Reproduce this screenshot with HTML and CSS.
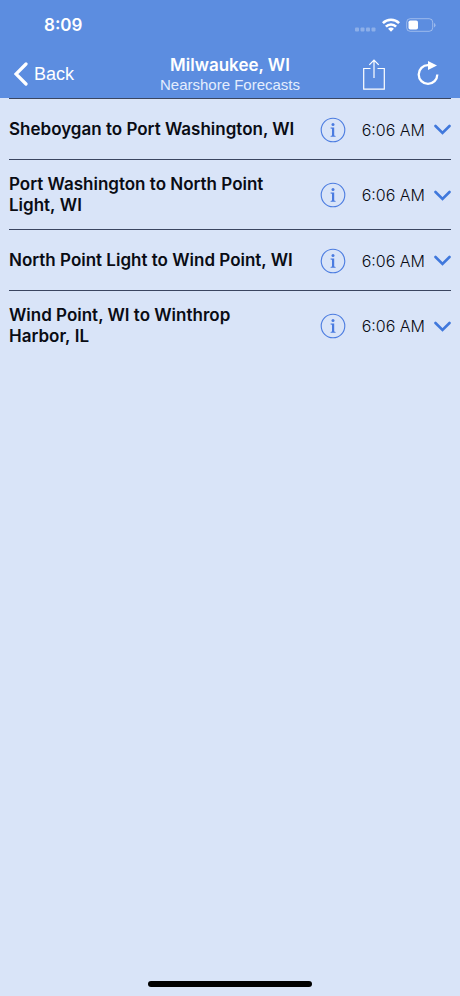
FILE: index.html
```html
<!DOCTYPE html>
<html lang="en">
<head>
  <meta charset="UTF-8">
  <meta name="viewport" content="width=device-width, initial-scale=1">
  <title>Nearshore Forecasts</title>
  <link rel="stylesheet" href="styles.css">
</head>
<body>
  <svg class="symbols" aria-hidden="true">
    <symbol id="info" viewBox="0 0 26 26">
      <circle cx="13" cy="13" r="11.8" fill="none" stroke="currentColor" stroke-width="1.1"/>
      <circle cx="13" cy="7.4" r="1.5" fill="currentColor"/>
      <path d="M10.6 10.6h3.6v8l1.4.5v.7h-5v-.7l1.4-.5v-6.800l-1.4-.4z" fill="currentColor"/>
    </symbol>
    <symbol id="chevron" viewBox="0 0 17 11">
      <path d="M1.500 2l7 7 7-7" fill="none" stroke="currentColor" stroke-width="2.600" stroke-linecap="round" stroke-linejoin="miter"/>
    </symbol>
  </svg>

  <header>
    <div class="status-bar">
      <span class="clock">8:09</span>
      <div class="status-icons">
        <svg width="22" height="14" viewBox="0 0 22 14" fill="#fff" opacity=".3">
          <rect x="1" y="9.500" width="4" height="4" rx="1"/>
          <rect x="6.500" y="9.500" width="4" height="4" rx="1"/>
          <rect x="12" y="9.500" width="4" height="4" rx="1"/>
          <rect x="17.500" y="9.500" width="4" height="4" rx="1"/>
        </svg>
        <svg width="18" height="14" viewBox="0 0 18 14" fill="none" stroke="#fff" stroke-width="2.600">
          <path d="M.9 5.200a11.400 11.400 0 0 1 16.200 0"/>
          <path d="M3.900 8.600a7.100 7.100 0 0 1 10.200 0"/>
          <path d="M9 13.800l-2.900-3a3.900 3.900 0 0 1 5.800 0z" fill="#fff" stroke="none"/>
        </svg>
        <svg width="30" height="14" viewBox="0 0 30 14">
          <rect x=".7" y=".7" width="26" height="12.600" rx="3.500" fill="none" stroke="#fff" stroke-opacity=".4"/>
          <rect x="2.500" y="2.500" width="9.500" height="9" rx="1.800" fill="#fff"/>
          <path d="M28 5v4.400q1.500-.6 1.500-2.200t-1.500-2.200z" fill="#fff" fill-opacity=".4"/>
        </svg>
      </div>
    </div>
    <nav class="nav-bar">
      <button class="back-btn">
        <svg width="14" height="24" viewBox="0 0 14 24" fill="none" stroke="#fff" stroke-width="3.200" stroke-linecap="round">
          <path d="M12 2L2 12l10 10"/>
        </svg>
        Back
      </button>
      <div class="nav-title">
        <h1>Milwaukee, WI</h1>
        <p>Nearshore Forecasts</p>
      </div>
      <div class="nav-actions">
        <button aria-label="Share">
          <svg width="22" height="31" viewBox="0 0 22 31" fill="none" stroke="#fff" stroke-width="1.200">
            <path d="M7.500 9.500H.7v20.600h20.600V9.500h-6.800M11 19V1.200M6.300 5.800L11 1l4.700 4.800"/>
          </svg>
        </button>
        <button aria-label="Refresh">
          <svg width="22" height="26" viewBox="0 0 22 26">
            <path d="M12.500 4.200H11a9.300 9.300 0 1 0 9.300 9.300" fill="none" stroke="#fff" stroke-width="2.300"/>
            <path d="M11 0l9 4.500-9 4.500z" fill="#fff"/>
          </svg>
        </button>
      </div>
    </nav>
  </header>

  <main>
    <ul class="forecast-list">
      <li class="forecast-item">
        <h2>Sheboygan to Port Washington, WI</h2>
        <button class="info-btn" aria-label="Info"><svg><use href="#info"/></svg></button>
        <button class="time-btn">6:06 AM <svg><use href="#chevron"/></svg></button>
      </li>
      <li class="forecast-item">
        <h2>Port Washington to North Point Light,&nbsp;WI</h2>
        <button class="info-btn" aria-label="Info"><svg><use href="#info"/></svg></button>
        <button class="time-btn">6:06 AM <svg><use href="#chevron"/></svg></button>
      </li>
      <li class="forecast-item">
        <h2>North Point Light to Wind Point, WI</h2>
        <button class="info-btn" aria-label="Info"><svg><use href="#info"/></svg></button>
        <button class="time-btn">6:06 AM <svg><use href="#chevron"/></svg></button>
      </li>
      <li class="forecast-item">
        <h2>Wind Point, WI to Winthrop Harbor,&nbsp;IL</h2>
        <button class="info-btn" aria-label="Info"><svg><use href="#info"/></svg></button>
        <button class="time-btn">6:06 AM <svg><use href="#chevron"/></svg></button>
      </li>
    </ul>
  </main>

  <div class="home-indicator"></div>
</body>
</html>
```
FILE: styles.css
```css
* {
  box-sizing: border-box;
}

body {
  display: flex;
  flex-direction: column;
  min-height: 100vh;
  margin: 0;
  background-color: #d9e4f8;
  color: #0a0c14;
  font-family: Inter, "Liberation Sans", sans-serif;
}

h1, h2, p, ul {
  margin: 0;
  padding: 0;
}

button {
  display: flex;
  align-items: center;
  padding: 0;
  border: none;
  background: none;
  color: inherit;
  font-family: inherit;
  cursor: pointer;
}

.symbols {
  position: absolute;
  width: 0;
  height: 0;
}

header {
  background-color: #5c8de0;
  color: #fff;
}

.status-bar {
  display: flex;
  justify-content: space-between;
  align-items: center;
  height: 50px;
  padding: 0 24px 0 44px;
}

.clock {
  font-size: 17px;
  font-weight: 600;
}

.status-icons {
  display: flex;
  gap: 6px;
}

.nav-bar {
  display: grid;
  grid-template-columns: 1fr auto 1fr;
  align-items: center;
  height: 48px;
  padding: 0 21px;
}

.back-btn {
  gap: 6px;
  margin-left: -7px;
  font-family: "Liberation Sans", sans-serif;
  font-size: 18px;
}

.nav-title {
  padding-top: 2px;
  text-align: center;
}

.nav-title h1 {
  font-size: 17px;
  line-height: 20px;
  font-weight: 600;
}

.nav-title p {
  font-family: "Liberation Sans", sans-serif;
  font-size: 15px;
  line-height: 20px;
  color: #e4edfd;
}

.nav-actions {
  display: flex;
  justify-content: flex-end;
  gap: 32px;
}

.forecast-list {
  padding: 0 9px;
  list-style: none;
}

.forecast-item {
  display: flex;
  align-items: center;
  min-height: 61px;
  padding: 14px 0 13px;
  border-top: 1px solid #3a4560;
}

.forecast-item h2 {
  flex: 1;
  padding-right: 16px;
  font-size: 17px;
  line-height: 21px;
  font-weight: 600;
}

.info-btn {
  color: #4a7be0;
}

.info-btn svg {
  width: 26px;
  height: 26px;
}

.time-btn {
  gap: 9px;
  margin-left: 16px;
  font-size: 16px;
  font-weight: 300;
}

.time-btn svg {
  width: 17px;
  height: 11px;
  color: #4078dc;
}

.home-indicator {
  width: 164px;
  height: 6px;
  margin: auto auto 9px;
  border-radius: 3px;
  background-color: #000;
}
```
